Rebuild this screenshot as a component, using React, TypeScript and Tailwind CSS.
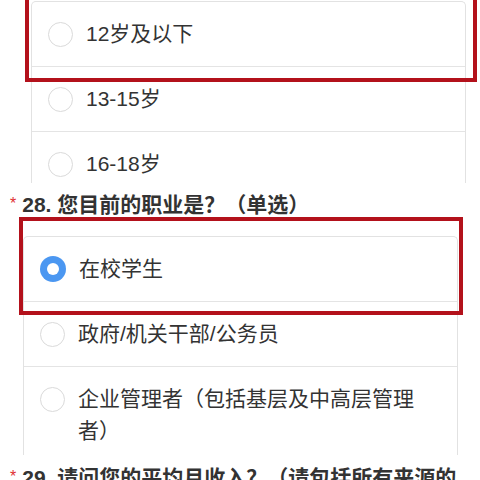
import React from 'react';

type Option = { label: string; checked?: boolean };

const font = { fontFamily: '"Liberation Sans", "Noto Sans CJK SC", sans-serif' };

const Radio: React.FC<{ checked?: boolean }> = ({ checked }) =>
  checked ? (
    <span className="mt-[3px] flex h-[26px] w-[26px] shrink-0 items-center justify-center rounded-full bg-[#4b97f1]">
      <span className="h-[12px] w-[12px] rounded-full bg-white" />
    </span>
  ) : (
    <span className="mt-[3.5px] h-[25px] w-[25px] shrink-0 rounded-full border-[1.5px] border-[#dadada] bg-white" />
  );

const OptionCard: React.FC<{ options: Option[]; className?: string; highlight: string }> = ({
  options,
  className,
  highlight,
}) => (
  <div className={`relative w-[435px] rounded-t-[5px] border-x border-t border-[#e2e2e2] bg-white ${className ?? ''}`}>
    {options.map((o, i) => (
      <div
        key={i}
        className={`flex items-start gap-[13px] py-[16px] pl-[16px] pr-8 ${i > 0 ? 'border-t border-[#e4e4e4]' : ''}`}
      >
        <Radio checked={o.checked} />
        <span className="text-[21px] leading-[32px] text-[#333]">{o.label}</span>
      </div>
    ))}
    <div className={`pointer-events-none absolute border-4 border-[#b3111b] ${highlight}`} />
  </div>
);

const Title: React.FC<{ num: number; text: string; className?: string }> = ({ num, text, className }) => (
  <div className={`flex items-start pl-[10px] pr-4 ${className ?? ''}`}>
    <span className="mr-[6px] mt-[2px] text-[16px] leading-[24px] text-[#e03131]">*</span>
    <span className="text-[21px] font-bold leading-[30px] text-[#333]">
      {num}. {text}
    </span>
  </div>
);

export default function App() {
  return (
    <div className="h-[480px] w-[480px] overflow-hidden bg-white" style={font}>
      <div className="h-[183px] overflow-hidden pt-[1px]">
        <OptionCard
          className="ml-[31px]"
          highlight="left-[-7px] top-[-21px] h-[101px] w-[452px]"
          options={[{ label: '12岁及以下' }, { label: '13-15岁' }, { label: '16-18岁' }]}
        />
      </div>

      <div className="h-[272px] overflow-hidden pt-[7px]">
        <Title num={28} text="您目前的职业是？（单选）" />
        <OptionCard
          className="ml-[23px] mt-[16px]"
          highlight="left-[-5px] top-[-20px] h-[98px] w-[444px]"
          options={[
            { label: '在校学生', checked: true },
            { label: '政府/机关干部/公务员' },
            { label: '企业管理者（包括基层及中高层管理者）' },
          ]}
        />
      </div>

      <div className="pt-[8px]">
        <Title num={29} text="请问您的平均月收入？（请包括所有来源的收入）" />
      </div>
    </div>
  );
}
